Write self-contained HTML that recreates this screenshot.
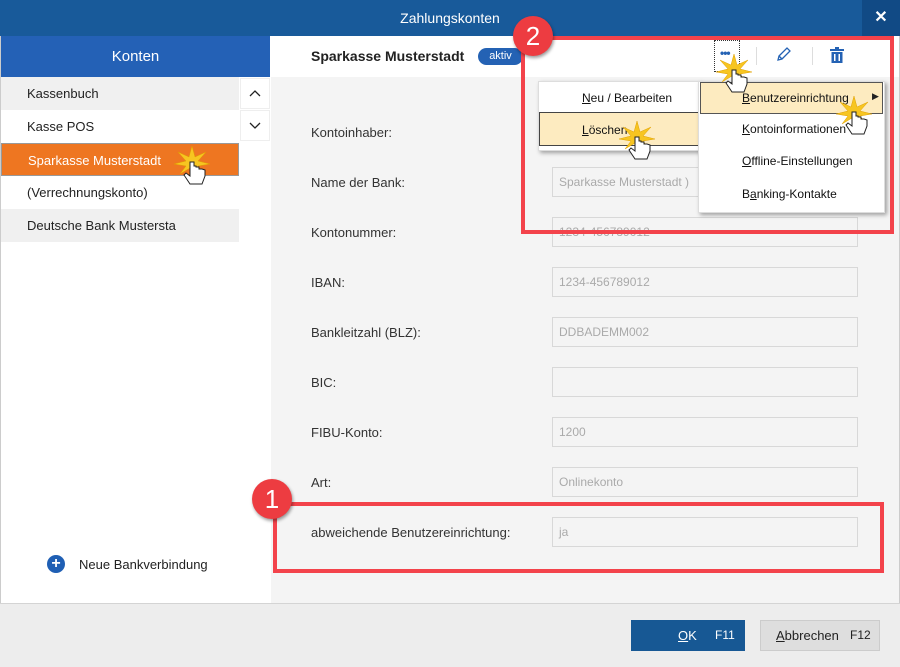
<!DOCTYPE html>
<html><head><meta charset="utf-8"><style>
*{box-sizing:border-box;margin:0;padding:0}
body{width:900px;height:667px;overflow:hidden;font-family:"Liberation Sans",sans-serif;font-size:13px;color:#222;background:#fff;position:relative}
.abs{position:absolute}
.title{left:0;top:0;width:900px;height:36px;background:#185a9a;color:#fff;text-align:center;line-height:36px;font-size:14px}
.close{left:862px;top:0;width:38px;height:36px;background:#114a85;color:#fff;text-align:center;line-height:36px;font-size:16px;font-weight:bold}
.konten{left:1px;top:36px;width:269px;height:41px;background:#2461b6;color:#fff;text-align:center;line-height:41px;font-size:15px}
.item{left:1px;width:238px;height:33px;line-height:33px;padding-left:26px;font-size:13px}
.scr{left:240px;width:30px;height:31px;background:#fff;border:1px solid #eee}
.right{left:271px;top:77px;width:628px;height:526px;background:#f4f4f4}
.hdr{left:271px;top:36px;width:628px;height:41px;background:#fff}
.lbl{left:311px;font-size:13px;color:#333}
.inp{left:552px;width:306px;height:30px;border:1px solid #d8d8d8;background:#f4f4f4;color:#aaa;font-size:12px;line-height:28px;padding-left:6px}
.foot{left:0;top:603px;width:900px;height:64px;background:#ededed;border-top:1px solid #d4d4d4}
.red{border:4px solid #f3434b}
.num{width:40px;height:40px;border-radius:50%;background:#ed3c41;color:#fff;font-size:26px;text-align:center;line-height:40px;box-shadow:1px 2px 3px rgba(0,0,0,.4)}
.menu{background:#fff;box-shadow:2px 2px 4px rgba(0,0,0,.35);border:1px solid #ddd}
.mi{font-size:12px;color:#111}
u{text-decoration:underline}
</style></head><body>
<div class="abs title">Zahlungskonten</div>
<div class="abs close">✕</div>
<div class="abs" style="left:0;top:36px;width:1px;height:631px;background:#ccc"></div>
<div class="abs" style="left:899px;top:36px;width:1px;height:631px;background:#ccc"></div>
<div class="abs konten">Konten</div>
<div class="abs item" style="top:77px;background:#f0f0f0">Kassenbuch</div>
<div class="abs item" style="top:110px;background:#fff">Kasse POS</div>
<div class="abs item" style="top:143px;background:#ee7621;color:#fff;border:1px solid #999">Sparkasse Musterstadt</div>
<div class="abs item" style="top:176px;background:#fff">(Verrechnungskonto)</div>
<div class="abs item" style="top:209px;background:#f0f0f0">Deutsche Bank Mustersta</div>
<div class="abs scr" style="top:78px"><svg width="28" height="29"><path d="M9 17 L14 12 L19 17" fill="none" stroke="#222" stroke-width="1.3"/></svg></div>
<div class="abs scr" style="top:110px"><svg width="28" height="29"><path d="M9 12 L14 17 L19 12" fill="none" stroke="#222" stroke-width="1.3"/></svg></div>
<div class="abs" style="left:47px;top:555px;width:18px;height:18px;border-radius:50%;background:#1f5fb4;color:#fff;text-align:center;line-height:18px;font-weight:bold;font-size:16px">+</div>
<div class="abs" style="left:79px;top:557px;font-size:13px">Neue Bankverbindung</div>

<div class="abs hdr"></div>
<div class="abs right"></div>
<div class="abs" style="left:311px;top:48px;font-size:14px;font-weight:bold;color:#222">Sparkasse Musterstadt</div>
<div class="abs" style="left:478px;top:48px;width:45px;height:17px;border-radius:9px;background:#2462b4;color:#fff;font-size:11px;line-height:17px;text-align:center">aktiv</div>
<div class="abs" style="left:714px;top:40px;width:26px;height:32px;border:1px dotted #333"></div>
<div class="abs" style="left:720px;top:46px;color:#2462b4;font-size:12px;font-weight:bold;letter-spacing:-1px">•••</div>
<div class="abs" style="left:756px;top:47px;width:1px;height:18px;background:#ddd"></div>
<div class="abs" style="left:812px;top:47px;width:1px;height:18px;background:#ddd"></div>
<svg class="abs" style="left:775px;top:47px" width="16" height="16"><path d="M3 13 L4 9 L12 1 L15 4 L7 12 Z M4 9 L7 12" fill="none" stroke="#2462b4" stroke-width="1.3"/></svg>
<svg class="abs" style="left:830px;top:47px" width="14" height="17"><rect x="0" y="2" width="14" height="2" fill="#2462b4"/><rect x="5" y="0" width="4" height="2" fill="#2462b4"/><rect x="1.5" y="5" width="11" height="11" fill="#2462b4"/><rect x="4" y="7" width="1.5" height="7" fill="#fff"/><rect x="8.5" y="7" width="1.5" height="7" fill="#fff"/></svg>

<div class="abs lbl" style="top:125px">Kontoinhaber:</div>
<div class="abs lbl" style="top:175px">Name der Bank:</div>
<div class="abs inp" style="top:167px">Sparkasse Musterstadt )</div>
<div class="abs lbl" style="top:225px">Kontonummer:</div>
<div class="abs inp" style="top:217px">1234-456789012</div>
<div class="abs lbl" style="top:275px">IBAN:</div>
<div class="abs inp" style="top:267px">1234-456789012</div>
<div class="abs lbl" style="top:325px">Bankleitzahl (BLZ):</div>
<div class="abs inp" style="top:317px">DDBADEMM002</div>
<div class="abs lbl" style="top:375px">BIC:</div>
<div class="abs inp" style="top:367px"></div>
<div class="abs lbl" style="top:425px">FIBU-Konto:</div>
<div class="abs inp" style="top:417px">1200</div>
<div class="abs lbl" style="top:475px">Art:</div>
<div class="abs inp" style="top:467px">Onlinekonto</div>
<div class="abs lbl" style="top:525px">abweichende Benutzereinrichtung:</div>
<div class="abs inp" style="top:517px">ja</div>

<div class="abs menu" style="left:538px;top:81px;width:163px;height:70px"></div>
<div class="abs mi" style="left:582px;top:91px"><u>N</u>eu / Bearbeiten</div>
<div class="abs" style="left:539px;top:112px;width:161px;height:34px;background:#fdebc0;border:1px solid #444"></div>
<div class="abs mi" style="left:582px;top:123px"><u>L</u>öschen</div>
<div class="abs menu" style="left:698px;top:81px;width:187px;height:132px"></div>
<div class="abs" style="left:700px;top:82px;width:183px;height:32px;background:#fdebc0;border:1px solid #555"></div>
<div class="abs mi" style="left:742px;top:91px"><u>B</u>enutzereinrichtung</div>
<div class="abs" style="left:872px;top:91px;font-size:9px">▶</div>
<div class="abs mi" style="left:742px;top:122px"><u>K</u>ontoinformationen</div>
<div class="abs mi" style="left:742px;top:154px"><u>O</u>ffline-Einstellungen</div>
<div class="abs mi" style="left:742px;top:187px">B<u>a</u>nking-Kontakte</div>

<div class="abs red" style="left:521px;top:36px;width:373px;height:198px"></div>
<div class="abs red" style="left:273px;top:502px;width:611px;height:71px"></div>
<div class="abs num" style="left:513px;top:16px">2</div>
<div class="abs num" style="left:252px;top:479px">1</div>

<svg width="0" height="0" style="position:absolute"><defs>
<g id="h"><polygon points="0,-16 3,-5 14,-10 6,-1 18,2 6,4 12,12 2,6 0,16 -2,6 -12,12 -6,4 -18,2 -6,-1 -14,-10 -3,-5" fill="#f7c521" stroke="#e0a000" stroke-width=".5"/>
<path d="M-2 0 L-2 14 L-6 11 L-8 13 L-2 22 L10 22 L13 14 L13 8 L10 7 L7 7 L7 5 L4 5 L4 4 L2 4 L2 0 Z" fill="#fff" stroke="#222" stroke-width="1"/></g></defs></svg>
<svg class="abs" style="left:170px;top:140px" width="50" height="60"><use href="#h" x="22" y="22"/></svg>
<svg class="abs" style="left:712px;top:50px" width="50" height="60"><use href="#h" x="22" y="20"/></svg>
<svg class="abs" style="left:615px;top:115px" width="50" height="60"><use href="#h" x="22" y="22"/></svg>
<svg class="abs" style="left:832px;top:90px" width="50" height="60"><use href="#h" x="22" y="22"/></svg>

<div class="abs foot"></div>
<div class="abs" style="left:631px;top:620px;width:114px;height:31px;background:#175894;color:#fff;font-size:13px;line-height:31px"><span style="position:absolute;left:47px"><u>O</u>K</span><span style="position:absolute;left:84px;font-size:12px">F11</span></div>
<div class="abs" style="left:760px;top:620px;width:120px;height:31px;background:#dedede;border:1px solid #ccc;font-size:13px;line-height:29px"><span style="position:absolute;left:15px"><u>A</u>bbrechen</span><span style="position:absolute;left:89px;font-size:12px">F12</span></div>
</body></html>
